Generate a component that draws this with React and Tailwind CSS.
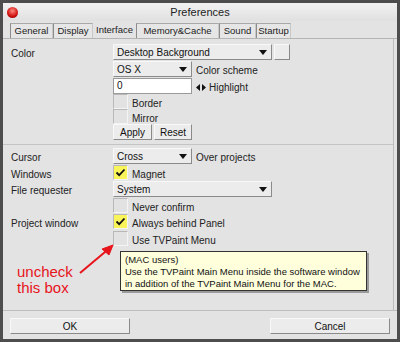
import React from 'react';

const font = { fontFamily: '"Liberation Sans", Arial, sans-serif' };

function Check({ checked }) {
  return (
    <div
      className={`w-[15px] h-[15px] border border-t-[#b8b8b8] border-l-[#b8b8b8] border-r-[#f4f4f4] border-b-[#f4f4f4] flex items-center justify-center ${
        checked ? 'bg-[#f8f45a]' : 'bg-[#e2e2e2]'
      }`}
    >
      {checked && (
        <svg width="11" height="9" viewBox="0 0 11 9">
          <path d="M1.5 4.5 L4.2 7.2 L9.5 1.5" fill="none" stroke="#111" strokeWidth="1.8" />
        </svg>
      )}
    </div>
  );
}

function Drop({ text, w, arrow = true }) {
  return (
    <div
      className={`${w} h-[16px] bg-[#ececec] border border-t-[#f8f8f8] border-l-[#f8f8f8] border-r-[#8a8a8a] border-b-[#8a8a8a] flex items-center justify-between pl-[3px] pr-[4px] text-[10px] text-[#111]`}
    >
      <span>{text}</span>
      {arrow && (
        <svg width="8" height="5" viewBox="0 0 8 5">
          <path d="M0 0 L8 0 L4 5 Z" fill="#111" />
        </svg>
      )}
    </div>
  );
}

function Btn({ text, w }) {
  return (
    <div
      className={`${w} h-[16px] bg-[#ececec] border border-t-[#f8f8f8] border-l-[#f8f8f8] border-r-[#8a8a8a] border-b-[#8a8a8a] flex items-center justify-center text-[10px] text-[#111]`}
    >
      {text}
    </div>
  );
}

function Row({ label, h, children }) {
  return (
    <div className={`flex ${h}`}>
      <div className="w-[102px] text-[10px] text-[#222] pt-[2px]">{label}</div>
      <div className="flex items-start gap-[4px]">{children}</div>
    </div>
  );
}

function Txt({ children }) {
  return <span className="text-[10px] text-[#222] pt-[2px] whitespace-nowrap">{children}</span>;
}

const tabs = [
  ['General', 'w-[43px]'],
  ['Display', 'w-[40px]'],
  ['Interface', 'w-[43px]'],
  ['Memory&Cache', 'w-[83px]'],
  ['Sound', 'w-[37px]'],
  ['Startup', 'w-[35px]'],
];

export default function App() {
  return (
    <div className="w-[400px] h-[342px] bg-[#4d4d4d] p-[3px]" style={font}>
      <div className="h-full bg-[#e3e3e3] flex flex-col rounded-t-[3px] relative">
        {/* title bar */}
        <div className="h-[18px] flex items-center justify-center relative bg-gradient-to-b from-[#f2f2f2] to-[#e0e0e0]">
          <div className="absolute left-[4px] top-[4px] w-[11px] h-[11px] rounded-full bg-[radial-gradient(circle_at_50%_35%,#ff8a80,#d01010_60%,#7a0000)]" />
          <span className="text-[11px] text-[#222]">Preferences</span>
        </div>

        {/* tabs */}
        <div className="h-[18px] flex items-end pl-[7px] border-b border-[#b4b4b4]">
          {tabs.map(([t, w]) => (
            <div
              key={t}
              className={`${w} h-[15px] flex items-center justify-center text-[9.5px] text-[#222] whitespace-nowrap ${
                t === 'Interface' ? '' : 'border-t border-l border-r border-t-[#a8a8a8] border-l-[#8c8c8c] border-r-[#c8c8c8] bg-[#e6e6e6]'
              }`}
            >
              {t}
            </div>
          ))}
        </div>

        {/* panel */}
        <div className="flex-1 flex flex-col pl-[8px] pt-[5px] border-r border-[#bdbdbd] mr-[3px] relative">
          <Row label="Color" h="h-[17px]">
            <Drop text="Desktop Background" w="w-[159px]" />
            <div className="w-[16px] h-[16px] -ml-[2px] bg-[#ececec] border border-t-[#f8f8f8] border-l-[#f8f8f8] border-r-[#8a8a8a] border-b-[#8a8a8a]" />
          </Row>
          <Row h="h-[17px]">
            <Drop text="OS X" w="w-[79px]" />
            <Txt>Color scheme</Txt>
          </Row>
          <Row h="h-[16px]">
            <div className="w-[79px] h-[16px] bg-white border border-[#9a9a9a] text-[10px] pl-[3px] leading-[14px] text-[#111]">0</div>
            <span className="text-[10px] text-[#222] pt-[2px] flex items-center gap-[3px]">
              <svg width="10" height="7" viewBox="0 0 10 7">
                <path d="M0 3.5 L4 0 L4 7 Z M10 3.5 L6 0 L6 7 Z" fill="#111" />
              </svg>
              Highlight
            </span>
          </Row>
          <Row h="h-[15px]">
            <Check />
            <Txt>Border</Txt>
          </Row>
          <Row h="h-[15px]">
            <Check />
            <Txt>Mirror</Txt>
          </Row>
          <Row h="h-[17px]">
            <Btn text="Apply" w="w-[39px]" />
            <Btn text="Reset" w="w-[38px] -ml-[2px]" />
          </Row>

          <div className="h-[1px] bg-[#c4c4c4] -ml-[8px] mt-[3px] mb-[3px]" />

          <Row label="Cursor" h="h-[17px]">
            <Drop text="Cross" w="w-[79px]" />
            <Txt>Over projects</Txt>
          </Row>
          <Row label="Windows" h="h-[16px]">
            <Check checked />
            <Txt>Magnet</Txt>
          </Row>
          <Row label="File requester" h="h-[17px]">
            <Drop text="System" w="w-[159px]" />
          </Row>
          <Row h="h-[16px]">
            <Check />
            <Txt>Never confirm</Txt>
          </Row>
          <Row label="Project window" h="h-[17px]">
            <Check checked />
            <Txt>Always behind Panel</Txt>
          </Row>
          <Row h="h-[16px]">
            <Check />
            <Txt>Use TVPaint Menu</Txt>
          </Row>

          <div className="flex mt-[4px]">
            <div className="w-[109px] pt-[13px] pl-[6px] text-[15px] leading-[16px] text-[#e8141c]">
              uncheck
              <br />
              this box
            </div>
            <div className="w-[247px] h-[40px] bg-[#ffffdc] border border-[#333] shadow-[2px_2px_0_#9a9a9a] pl-[4px] pt-[2px] text-[9.5px] leading-[12px] text-[#111] whitespace-nowrap">
              (MAC users)
              <br />
              Use the TVPaint Main Menu inside the software window
              <br />
              in addition of the TVPaint Main Menu for the MAC.
            </div>
          </div>

          {/* annotation arrow */}
          <svg className="absolute left-[70px] top-[201px]" width="45" height="40" viewBox="0 0 45 40">
            <path d="M7 33 L38 7" stroke="#e8141c" strokeWidth="2" fill="none" />
            <path d="M40 5 L29 9 L36 15 Z" fill="#e8141c" stroke="#e8141c" strokeWidth="1" />
          </svg>
        </div>

        {/* footer */}
        <div className="h-[29px] border-t border-[#bdbdbd] flex items-center justify-between px-[7px] pt-[2px]">
          <Btn text="OK" w="w-[120px]" />
          <Btn text="Cancel" w="w-[120px]" />
        </div>
      </div>
    </div>
  );
}
